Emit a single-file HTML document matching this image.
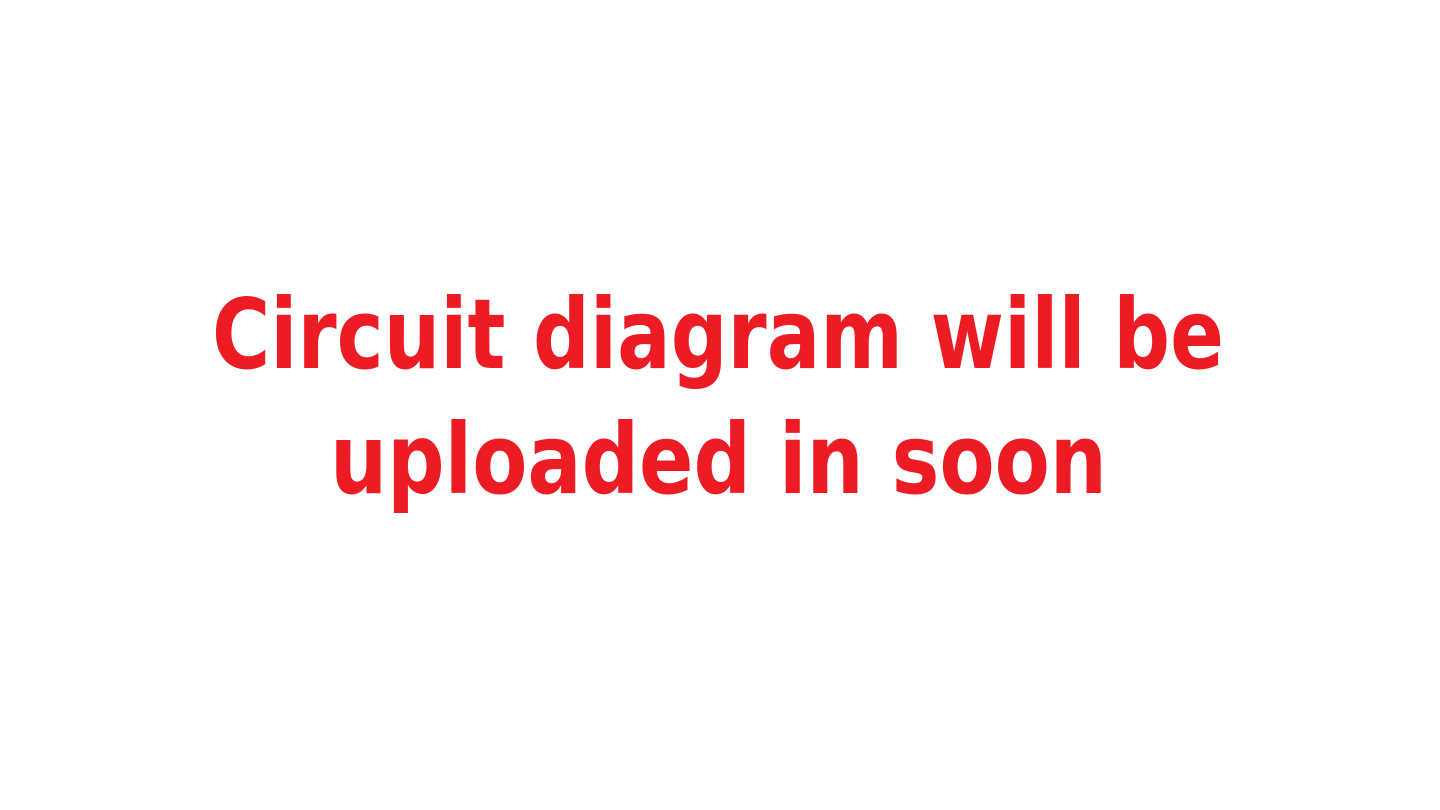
<!DOCTYPE html>
<html><head><meta charset="utf-8"><style>
html,body{margin:0;padding:0;background:#fff;width:1440px;height:810px;overflow:hidden}
svg{display:block}
text{font-family:"DejaVu Sans","Liberation Sans",sans-serif;font-weight:bold;fill:#ED1C24}
</style></head><body>
<svg width="1440" height="810" viewBox="0 0 1440 810">
<text x="212" y="368" font-size="97" textLength="1012" lengthAdjust="spacingAndGlyphs">Circuit diagram will be</text>
<text x="330" y="493" font-size="97" textLength="777" lengthAdjust="spacingAndGlyphs">uploaded in soon</text>
</svg>
</body></html>
